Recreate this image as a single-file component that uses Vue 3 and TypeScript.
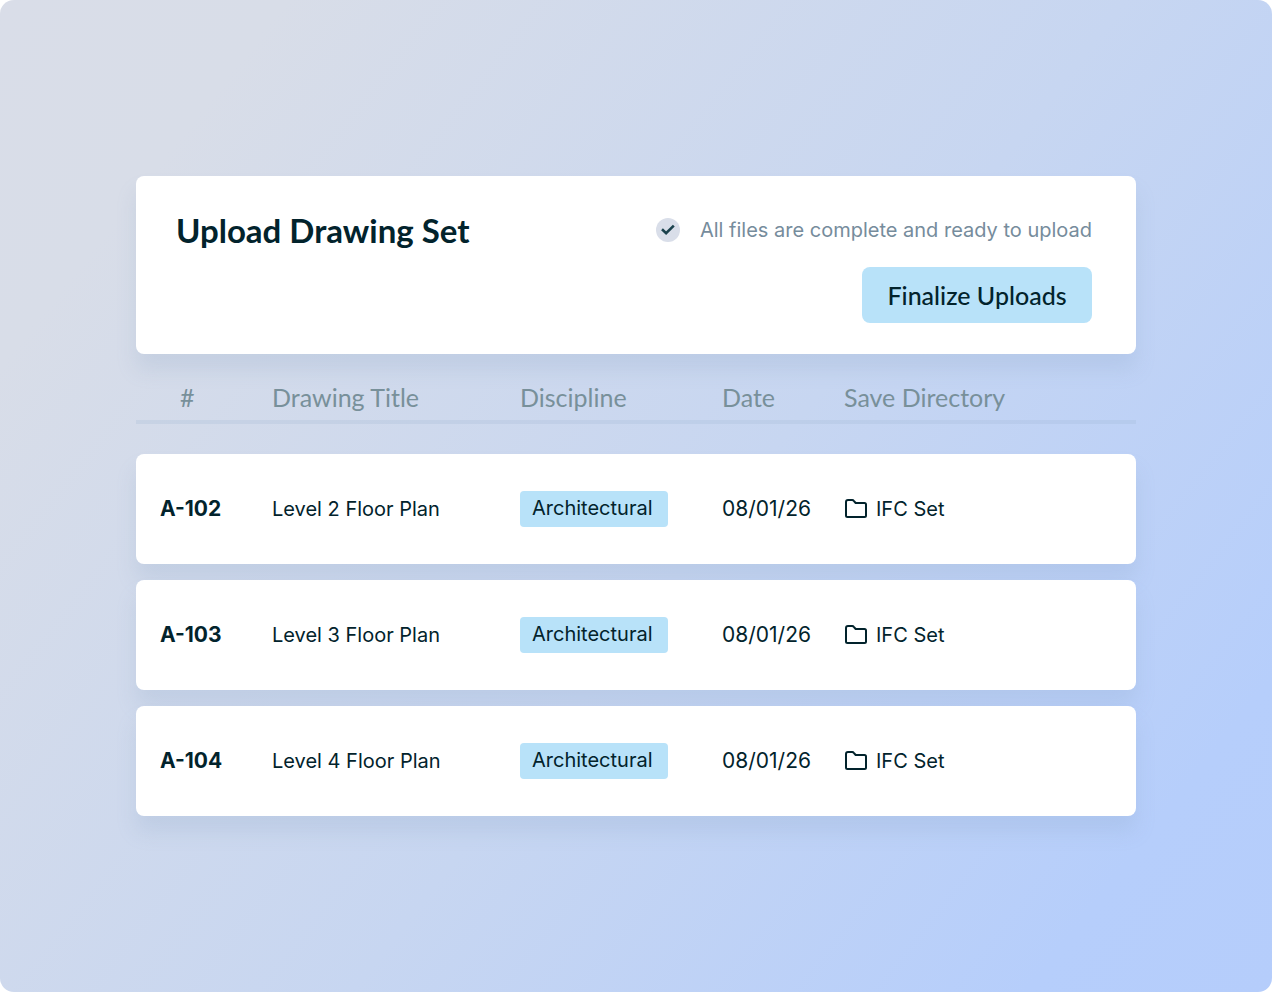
<script setup lang="ts">
interface Drawing {
  number: string
  title: string
  discipline: string
  date: string
  directory: string
}

const columns: string[] = ['#', 'Drawing Title', 'Discipline', 'Date', 'Save Directory']

const drawings: Drawing[] = [2, 3, 4].map((level) => ({
  number: `A-10${level}`,
  title: `Level ${level} Floor Plan`,
  discipline: 'Architectural',
  date: '08/01/26',
  directory: 'IFC Set',
}))
</script>

<template>
  <main class="page">
    <header class="panel">
      <h1 class="heading">Upload Drawing Set</h1>
      <div class="actions">
        <p class="status">
          <svg class="check" viewBox="0 0 24 24" aria-hidden="true">
            <circle cx="12" cy="12" r="12" fill="#d9dee9" />
            <path d="M6 11.3 L10.1 15.2 L17.8 7.6" fill="none" stroke="#1b424d" stroke-width="2.6" />
          </svg>
          <span>All files are complete and ready to upload</span>
        </p>
        <button class="finalize" type="button">Finalize Uploads</button>
      </div>
    </header>

    <table class="drawings">
      <thead>
        <tr class="head-row">
          <th v-for="column in columns" :key="column" scope="col">{{ column }}</th>
        </tr>
      </thead>
      <tbody>
        <tr v-for="drawing in drawings" :key="drawing.number" class="row">
          <th class="number" scope="row">{{ drawing.number }}</th>
          <td>{{ drawing.title }}</td>
          <td><span class="tag">{{ drawing.discipline }}</span></td>
          <td class="date">{{ drawing.date }}</td>
          <td>
            <span class="directory">
              <svg class="folder" viewBox="0 0 24 20" aria-hidden="true">
                <path
                  d="M2 3 Q2 1 4 1 H8.2 Q9.2 1 9.8 1.8 L11.2 3.5 Q11.6 4 12.4 4 H20.5 Q22 4 22 5.5 V16.5 Q22 18 20.5 18 H3.5 Q2 18 2 16.5 Z"
                  fill="none"
                  stroke="currentColor"
                  stroke-width="2"
                  stroke-linejoin="round"
                />
              </svg>
              {{ drawing.directory }}
            </span>
          </td>
        </tr>
      </tbody>
    </table>
  </main>
</template>

<style>
body {
  margin: 0;
  background: #fff;
}
</style>

<style scoped>
.page {
  box-sizing: border-box;
  min-height: 100vh;
  padding: 176px 136px;
  border-radius: 14px;
  background: linear-gradient(128deg, #d9dde8 0%, #d8dde8 14%, #c7d6f1 55%, #b6cefb 88%, #b5cdfb 100%);
  color: #02232c;
  font-family: Inter, "Liberation Sans", sans-serif;
  font-size: 20px;
  line-height: 28px;
}

.panel {
  display: flex;
  justify-content: space-between;
  align-items: flex-start;
  box-sizing: border-box;
  min-height: 178px;
  padding: 32px 44px 31px 40px;
  border-radius: 8px;
  background: #fff;
  box-shadow: 0 16px 20px rgba(130, 155, 190, 0.18);
}

.heading {
  margin: 0;
  font-family: Lato, "Liberation Sans", sans-serif;
  font-size: 33px;
  font-weight: 700;
  line-height: 44px;
}

.actions {
  display: flex;
  flex-direction: column;
  align-items: flex-end;
  gap: 15px;
}

.status {
  display: flex;
  align-items: center;
  gap: 20px;
  margin: 0;
  color: #768c9c;
  line-height: 44px;
}

.check {
  width: 24px;
  height: 24px;
}

.finalize {
  min-width: 230px;
  height: 56px;
  padding: 0 24px;
  border: 0;
  border-radius: 8px;
  background: #b8e2f9;
  color: #02232c;
  font-family: Lato, "Liberation Sans", sans-serif;
  font-size: 25px;
  font-weight: 500;
  cursor: pointer;
}

.drawings,
.drawings thead {
  display: block;
}

.drawings tbody {
  display: flex;
  flex-direction: column;
  gap: 16px;
  margin-top: 30px;
}

.head-row,
.row {
  display: grid;
  grid-template-columns: 112px 248px 202px 122px 1fr;
  align-items: center;
  padding: 0 24px;
}

.head-row {
  height: 66px;
  border-bottom: 4px solid rgba(150, 175, 205, 0.2);
}

.head-row th {
  padding: 20px 0 0;
  color: #78909a;
  font-family: Lato, "Liberation Sans", sans-serif;
  font-size: 25px;
  font-weight: 400;
  text-align: left;
}

.head-row th:first-child {
  padding-left: 20px;
}

.row {
  height: 110px;
  border-radius: 8px;
  background: #fff;
  box-shadow: 0 16px 20px rgba(130, 155, 190, 0.18);
}

.row td,
.row th {
  padding: 0;
  text-align: left;
}

.number {
  font-size: 21px;
  font-weight: 700;
}

.date {
  font-size: 21px;
}

.tag {
  display: inline-block;
  box-sizing: border-box;
  min-width: 148px;
  height: 36px;
  padding: 0 12px;
  border-radius: 4px;
  background: #b8e2f9;
  line-height: 34px;
}

.directory {
  display: flex;
  align-items: center;
  gap: 8px;
}

.folder {
  width: 24px;
  height: 20px;
}
</style>
